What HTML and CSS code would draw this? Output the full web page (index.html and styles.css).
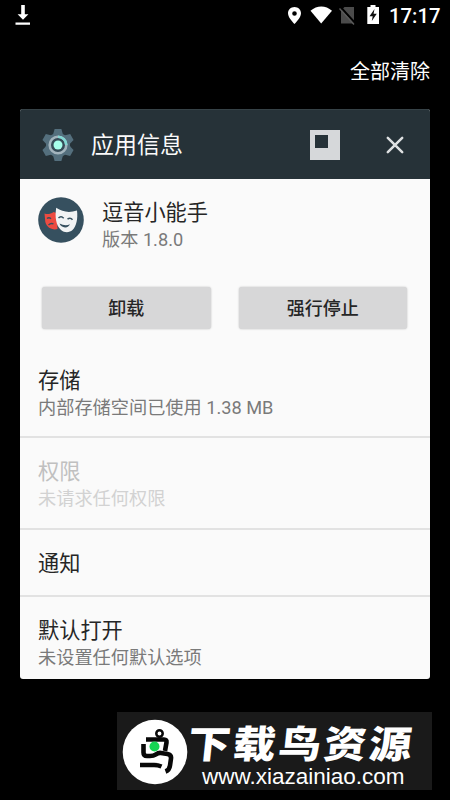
FILE: index.html
```html
<!DOCTYPE html>
<html lang="zh-CN">
<head>
<meta charset="utf-8">
<title>应用信息</title>
<link rel="stylesheet" href="styles.css">
</head>
<body>
<div class="screen">
  <header class="status">
    <svg class="download" width="16" height="22" viewBox="0 0 16 22"><path d="M6.2 1h3.6v9.2h3.6L8 15.8 2.6 10.2h3.6zM.5 18.4h14.5v2.3H.5z" fill="#fff"/></svg>
    <div class="status-right">
      <svg class="tray" width="96" height="22" viewBox="0 0 96 22">
        <path fill="#fff" fill-rule="evenodd" d="M6.5 3C2.8 3 0 5.8 0 9.3 0 14 6.5 20 6.5 20S13 14 13 9.3C13 5.8 10.2 3 6.5 3zm0 4.2a2.3 2.3 0 1 1 0 4.6 2.3 2.3 0 0 1 0-4.6z"/>
        <path fill="#fff" d="M22.5 6.8C29 .9 37.6.9 44 6.8L33.2 19.5z"/>
        <path fill="#4b4b4b" d="M56.5 3H66v16.5H53V6.5z"/>
        <path d="M52.5 3l15 16.5" stroke="#000" stroke-width="2"/>
        <path d="M51.5 4.5l14.5 16" stroke="#5a5a5a" stroke-width="1.4"/>
        <path fill="#fff" d="M79.3 3h3.2V1h5v2H91v17H79.3z"/>
        <path fill="#111" d="M86.5 5l-5 7.2h3.2L83.8 17l5-7.2h-3.2z"/>
      </svg>
      <span class="clock">17:17</span>
    </div>
  </header>
  <div class="clear">全部清除</div>
  <main class="card">
    <div class="card-head">
      <svg class="gear" width="34" height="34" viewBox="-17 -17 34 34">
        <g fill="#546f7d">
          <circle r="12"/>
          <path id="tooth" d="M-4.8-11L-3.4-16H3.4L4.8-11V11L3.4 16H-3.4L-4.8 11z"/>
          <use href="#tooth" transform="rotate(60)"/>
          <use href="#tooth" transform="rotate(120)"/>
        </g>
        <circle r="8.3" fill="#354b57" stroke="#a3b4bd" stroke-width="2.6"/>
        <path d="M0-8.3A8.3 8.3 0 0 1 8.3 0" fill="none" stroke="#83d8d3" stroke-width="2.6"/>
        <circle r="4.5" fill="#a7ffeb"/>
      </svg>
      <h1>应用信息</h1>
      <svg class="window" width="30" height="30" viewBox="0 0 30 30"><path fill="#d6d8da" fill-rule="evenodd" d="M0 0h30v30H0zM5 5v13h13V5z"/></svg>
      <svg class="close" width="18" height="18" viewBox="0 0 18 18"><path d="M1.8 1.8l14.4 14.4M16.2 1.8L1.8 16.2" stroke="#dde0e1" stroke-width="2.5" stroke-linecap="round"/></svg>
    </div>
    <section class="app">
      <svg width="46" height="46" viewBox="0 0 46 46">
        <circle cx="23" cy="23" r="22.8" fill="#36505f"/>
        <path fill="#ed4b41" d="M6.5 16.5c3 1 6 .6 9-1.5l3 1 1 16c-5 1.5-11-1.5-12.2-7z"/>
        <path d="M9 21.5q2-1.800 4 .2M10.500 28q2.500-2.500 5-1" fill="none" stroke="#36505f" stroke-width="1.4"/>
        <path fill="#f1f3f4" d="M18.200 10.800c6.500 4.400 13.500 5.200 20.800 2.600 1 8-.5 15.600-4.500 19.600-3 2.800-8 3-11.500 0-5-4.500-6.300-13-4.800-22.200z"/>
        <path d="M20.500 21q2.500-2.700 5.200.2M29.500 22.200q2.800-2.200 5 .5" fill="none" stroke="#36505f" stroke-width="1.5"/>
        <path d="M21.500 26.500q5.500 2.800 10.500.8-1.500 3.300-5 3.100-4-.2-5.500-3.900z" fill="#36505f"/>
      </svg>
      <div class="app-text"><h2>逗音小能手</h2><p>版本 1.8.0</p></div>
    </section>
    <div class="actions"><button>卸载</button><button>强行停止</button></div>
    <section class="row storage"><h2>存储</h2><p>内部存储空间已使用 1.38 MB</p></section>
    <section class="row disabled"><h2>权限</h2><p>未请求任何权限</p></section>
    <section class="row notify"><h2>通知</h2></section>
    <section class="row"><h2>默认打开</h2><p>未设置任何默认选项</p></section>
  </main>
  <footer class="brand">
    <svg width="66" height="66" viewBox="0 0 66 66">
      <circle cx="33" cy="33" r="32.3" fill="#fff"/>
      <g fill="none" stroke="#080808" stroke-width="4.6" stroke-linejoin="round">
        <circle cx="37.5" cy="14.5" r="3.2" stroke-width="2.5"/>
        <path d="M24 20.500h18q3 0 2.500 3l-1.500 8.500"/>
        <path d="M21.500 25v8.500q0 3.500 3.500 3.500h3q3.500 0 6-1.700t5-1.300l6.500 1q4 .8 3.500 4.500l-1 7q-.5 4.500-4.500 6"/>
        <path d="M18 46h14q4 0 7.500 1.500"/>
      </g>
      <circle cx="32.500" cy="27.500" r="5" fill="#16d453"/>
    </svg>
    <div class="brand-text"><div class="brand-name">下载鸟资源</div><div class="brand-url">www.xiazainiao.com</div></div>
  </footer>
</div>
</body>
</html>
```
FILE: styles.css
```css
* { box-sizing: border-box; }
body {
  margin: 0;
  background: #000;
  font-family: Roboto, "Noto Sans CJK SC", sans-serif;
}
h1, h2, p { margin: 0; font-weight: 400; }
svg { display: block; flex: none; }
.screen { width: 450px; height: 800px; overflow: hidden; background: #000; }
.status {
  height: 32px;
  padding: 4px 10px 0 15px;
  display: flex;
  justify-content: space-between;
  align-items: flex-start;
  color: #fff;
}
.status-right { display: flex; }
.clock { width: 51px; margin-left: 5px; font-size: 20.3px; font-weight: 500; line-height: 24px; white-space: nowrap; }
.clear {
  height: 77px;
  padding: 25px 20px 0 0;
  color: #fff;
  font-size: 20px;
  line-height: 30px;
  text-align: right;
}
.card {
  width: 410px;
  height: 570px;
  margin-left: 20px;
  background: #fafafa;
  border-radius: 3px;
  overflow: hidden;
}
.card-head {
  height: 70px;
  padding: 0 26px 0 21px;
  display: flex;
  align-items: center;
  background: #263238;
  border-top: 1px solid #364247;
}
.card-head h1 { flex: 1; margin-left: 16px; padding-top: 2px; color: #fafafa; font-size: 23px; line-height: 34px; }
.close { margin-left: 46px; }
.app { height: 108px; padding: 18px 18px 0; display: flex; }
.app-text { margin-left: 18px; padding-top: 1px; }
h2 { color: #262626; font-size: 21.2px; line-height: 30px; }
p { color: #7a7a7a; font-size: 18.2px; line-height: 24px; }
.actions { height: 71px; padding: 0 23px 0 22px; display: flex; gap: 28px; }
.actions button {
  flex: 1;
  height: 42px;
  padding: 1px 0 0;
  border: 0;
  border-radius: 3px;
  background: #d7d7d8;
  box-shadow: 0 0 2px #bbb;
  color: #262626;
  font: 500 18px/41px Roboto, "Noto Sans CJK SC", sans-serif;
}
.row { height: 92px; padding: 19px 18px 0; border-top: 2px solid #e2e2e2; }
.storage { height: 78px; padding-top: 8px; border-top: 0; }
.notify { height: 67px; }
.disabled h2 { color: #c0c0c0; }
.disabled p { color: #d2d2d2; }
.brand {
  width: 315px;
  height: 78px;
  margin: 33px 0 0 117px;
  padding: 7px 0 0 5px;
  display: flex;
  background: #1a1a1a;
  color: #fff;
}
.brand-name {
  height: 48px;
  font: 900 38px/45px "Noto Sans CJK SC", sans-serif;
  letter-spacing: 2.5px;
  white-space: nowrap;
  transform: skewX(-6deg) scaleX(1.12);
  transform-origin: 0 50%;
}
.brand-url {
  margin: -2px 0 0 14px;
  font: 22.5px/24px "Liberation Sans", sans-serif;
  white-space: nowrap;
}
```
